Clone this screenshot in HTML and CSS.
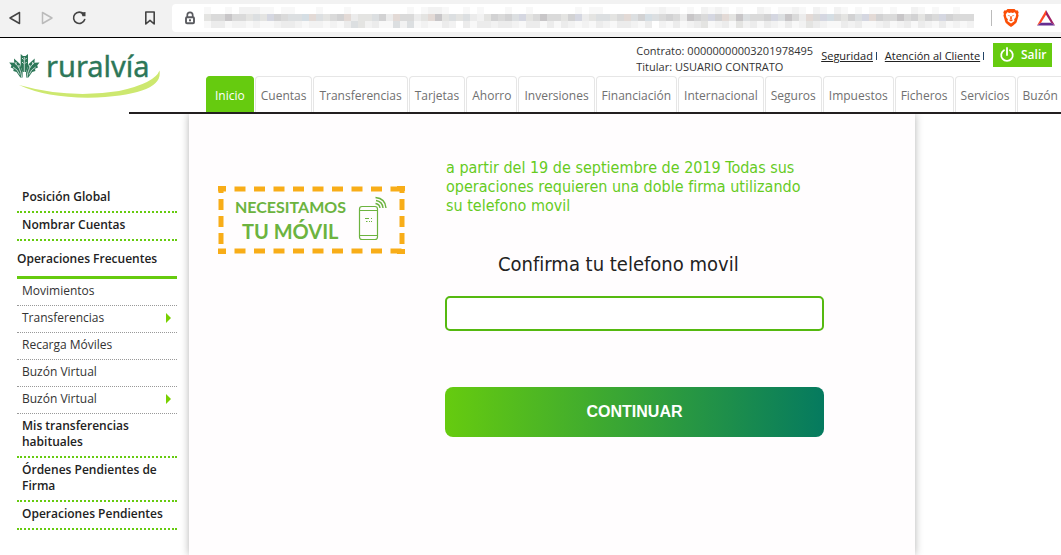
FILE: index.html
```html
<!DOCTYPE html>
<html lang="es">
<head>
<meta charset="utf-8">
<title>ruralvía</title>
<meta name="viewport" content="width=device-width, initial-scale=1">
<link rel="stylesheet" href="styles.css">
</head>
<body>
<div class="browser-bar">
  <div class="browser-nav">
    <button type="button" class="icon-button" aria-label="Atrás"><svg width="16" height="18" viewBox="0 0 16 18"><path d="M12.500 3.500v11L3 9z" fill="none" stroke="#444" stroke-width="1.500" stroke-linejoin="round"/></svg></button>
    <button type="button" class="icon-button" aria-label="Adelante"><svg width="16" height="18" viewBox="0 0 16 18"><path d="M3.500 3.500v11L13 9z" fill="none" stroke="#bbb" stroke-width="1.500" stroke-linejoin="round"/></svg></button>
    <button type="button" class="icon-button" aria-label="Recargar"><svg width="16" height="18" viewBox="0 0 16 18"><path d="M12.600 5.100A5.700 5.700 0 1 0 13.700 10.500" fill="none" stroke="#444" stroke-width="1.600" stroke-linecap="round"/><path d="M10 3.500l4.500-.5v4.200h-3z" fill="#444"/></svg></button>
  </div>
  <button type="button" class="icon-button bookmark" aria-label="Marcador"><svg width="16" height="18" viewBox="0 0 16 18"><path d="M3.800 3h8.400v12L8 11.300 3.800 15z" fill="none" stroke="#444" stroke-width="1.600" stroke-linejoin="round"/></svg></button>
  <div class="address">
    <svg class="lock" width="12" height="14" viewBox="0 0 12 14"><path d="M3.300 6V4a2.700 2.700 0 0 1 5.400 0v2" fill="none" stroke="#5a5b60" stroke-width="1.700"/><rect x="2" y="6.300" width="8" height="6" rx="1" fill="#fff" stroke="#5a5b60" stroke-width="1.900"/><rect x="5" y="8.300" width="2" height="2" fill="#5a5b60"/></svg>
    <svg class="mosaic" id="mosaic" width="770" height="21" viewBox="0 0 770 21" shape-rendering="crispEdges" aria-hidden="true"></svg>
    <span class="divider"></span>
    <svg class="shield" width="16" height="18" viewBox="0 0 16 18"><path d="M4.500 0h7l1.500 1.500 1.500-.2 1.200 2-.6 1.600.5 1.600-1.900 6.500Q13 14.800 8 17.900 3 14.800 2.300 13L.4 6.500l.5-1.600-.6-1.600 1.200-2 1.500.2z" fill="#fb4f07"/><path d="M4.200 3.200L6.500 4l1.500-.4L9.500 4l2.300-.8L13.200 5.500l-.6 3-1.500 1.700.4 1.800L8 14.500 4.500 12l.4-1.800-1.500-1.700-.6-3z" fill="#fff"/><path d="M4.500 6l2.300.6-.4 1zM11.500 6l-2.300.6.4 1zM7.500 7h1l.5 2.500-1 .7-1-.7zM5.800 11L8 10.300l2.200.7L8 12.400z" fill="#fb4f07"/></svg>
    <svg class="triangle" width="18" height="16" viewBox="0 0 18 16"><path d="M9 0L0 15.500 4 12.800 9 4.800z" fill="#ff4724"/><path d="M9 0l9 15.500-4-2.700-5-8z" fill="#9e1f63"/><path d="M0 15.500h18l-4-2.700H4z" fill="#662d91"/></svg>
  </div>
</div>

<header class="header">
  <a class="logo" href="#" aria-label="ruralvía">
    <svg width="156" height="63" viewBox="0 -13 156 63">
      <g fill="#2d7758">
        <path d="M11.700 3L14 5h2.600L19 3v12.500L17 21h-3.400l-1.900-5.500z"/>
        <path d="M5 7.500l6 5.500 2.600 8.500v5h-2.300L7.500 21 4.300 20l.4-2.300-3-1.200.8-2L.2 11.500l5 .2z"/>
        <path d="M25.700 7.500l-6 5.500-2.600 8.500v5h2.300l3.800-5.500 3.200-1-.4-2.300 3-1.200-.8-2 2.300-3-5 .2z"/>
      </g>
      <path d="M15.300 6v20.500M5.500 11.800q6 4.200 7.200 14.500M25.200 11.800q-6 4.200-7.200 14.500M4 16q5 2.500 6.500 7.500M26.700 16q-5 2.500-6.500 7.500" fill="none" stroke="#fff" stroke-width=".7"/>
      <path d="M13 7l1.500 1.500M13 11l1.500 1.500M17.700 7l-1.500 1.500M17.700 11l-1.500 1.500M7 11v2.500M10 14v2.500M23.700 11v2.500M20.700 14v2.500" fill="none" stroke="#fff" stroke-width=".8"/>
      <path d="M10 34Q40 48 88 46.500Q155 43 150.500 19.500Q146 32 110 40Q60 48 10 34z" fill="#cde86f"/>
      <text class="logo-word" x="37" y="26">ruralvía</text>
    </svg>
  </a>
  <div class="header-main">
    <div class="account">
      <p class="contract">Contrato: 00000000003201978495<br>Titular: USUARIO CONTRATO</p>
      <div class="links"><span><a href="#">Seguridad</a> <i class="bar"></i></span><span><a href="#">Atención al Cliente</a> <i class="bar"></i></span></div>
      <button type="button" class="exit"><svg width="16" height="16" viewBox="0 0 16 16"><path d="M5 3.200a5.800 5.800 0 1 0 6 0M8 1v7" fill="none" stroke="#fff" stroke-width="1.800" stroke-linecap="round"/></svg>Salir</button>
    </div>
    <nav class="tabs">
      <a class="tab active" href="#">Inicio</a><a class="tab" href="#">Cuentas</a><a class="tab" href="#">Transferencias</a><a class="tab" href="#">Tarjetas</a><a class="tab" href="#">Ahorro</a><a class="tab" href="#">Inversiones</a><a class="tab" href="#">Financiación</a><a class="tab" href="#">Internacional</a><a class="tab" href="#">Seguros</a><a class="tab" href="#">Impuestos</a><a class="tab" href="#">Ficheros</a><a class="tab" href="#">Servicios</a><a class="tab last" href="#">Buzón</a>
    </nav>
  </div>
</header>

<div class="layout">
  <nav class="sidebar">
    <a class="section" href="#">Posición Global</a>
    <a class="section" href="#">Nombrar Cuentas</a>
    <h2 class="group">Operaciones Frecuentes</h2>
    <a class="item" href="#">Movimientos</a>
    <a class="item more" href="#">Transferencias</a>
    <a class="item" href="#">Recarga Móviles</a>
    <a class="item" href="#">Buzón Virtual</a>
    <a class="item more" href="#">Buzón Virtual</a>
    <a class="section" href="#">Mis transferencias habituales</a>
    <a class="section" href="#">Órdenes Pendientes de Firma</a>
    <a class="section" href="#">Operaciones Pendientes</a>
  </nav>
  <main class="panel">
    <svg class="banner" width="187" height="68" viewBox="0 0 187 68">
      <g fill="none" stroke="#f8ad18" stroke-width="5">
        <path d="M0 3h187M0 65h187" stroke-dasharray="11 8.500" stroke-dashoffset="3"/>
        <path d="M3 0v68M184 0v68" stroke-dasharray="11 6" stroke-dashoffset="4"/>
      </g>
      <g fill="#f8ad18"><path d="M0 0h8v5H0zM179 0h8v5h-8zM0 63h8v5H0zM179 63h8v5h-8z"/></g>
      <text class="banner-small" x="17" y="27">NECESITAMOS</text>
      <text class="banner-large" x="24" y="53">TU MÓVIL</text>
      <g fill="none" stroke="#6cb33f" stroke-width="1.200">
        <rect x="141.500" y="20.500" width="18" height="33" rx="2.500"/>
        <path d="M141.500 24.500h18M141.500 49.500h18"/>
        <path d="M147 32.500h4M153 32.500h1M148 35.500h1.500M151 35.500h1M153 35.500h1"/>
        <path d="M157.500 17.500q4 .5 4.500 4.500M158 14.500q6.500 1 7 7.500M157.500 11.500q10 1 10.500 10.500" stroke-width="1.400"/>
      </g>
    </svg>
    <div class="confirm">
      <p class="notice">a partir del 19 de septiembre de 2019 Todas sus operaciones requieren una doble firma utilizando su telefono movil</p>
      <label class="phone-label" for="phone">Confirma tu telefono movil</label>
      <input class="phone-input" id="phone" type="text">
      <button class="continue" type="button">CONTINUAR</button>
    </div>
  </main>
</div>
<script src="mosaic.js"></script>
</body>
</html>
```
FILE: styles.css
```css
* { box-sizing: border-box; }
body {
  margin: 0;
  min-height: 100vh;
  display: flex;
  flex-direction: column;
  background: #fff;
  color: #333;
  font: 12px/16px "Open Sans", sans-serif;
  overflow-x: hidden;
}
a { color: inherit; text-decoration: none; }
button { font: inherit; border: 0; padding: 0; cursor: pointer; }
svg { display: block; flex: none; }

.browser-bar {
  display: flex;
  align-items: center;
  height: 38px;
  padding: 0 0 2px 7px;
  background: #f2f2f2;
  border-bottom: 1px solid #000;
}
.browser-nav { display: flex; gap: 16px; }
.icon-button { background: none; }
.bookmark { margin: 0 14px 0 55px; }
.address {
  flex: 1;
  min-width: 0;
  display: flex;
  align-items: center;
  height: 28px;
  padding: 0 7px 0 12px;
  background: #fff;
  border-radius: 4px 0 0 4px;
}
.mosaic { margin: 0 17px 0 8px; }
.divider { width: 1px; height: 16px; background: #bbb; flex: none; }
.shield { margin: 0 18px 0 11px; }

.header { display: flex; height: 76px; }
.logo { flex: none; width: 206px; padding-left: 9px; }
.logo-word { font: 29px "Noto Sans", sans-serif; fill: #2d7758; stroke: #2d7758; stroke-width: 0.4; }
.header-main {
  flex: 1;
  min-width: 0;
  display: flex;
  flex-direction: column;
  justify-content: space-between;
}
.account { display: flex; justify-content: flex-end; padding: 5px 9px 0 0; font-size: 11px; }
.contract { margin: 0 8px 0 0; }
.links { display: flex; gap: 8px; padding-top: 5px; margin-right: 9px; }
.links a { text-decoration: underline; color: #222; }
.bar { display: inline-block; width: 1px; height: 8px; background: #246; }
.exit {
  display: flex;
  align-items: center;
  gap: 6px;
  width: 59px;
  height: 24px;
  padding-left: 6px;
  background: #66cb0f;
  color: #fff;
  font-size: 12px;
  font-weight: 600;
}
.tabs { display: flex; gap: 1px; height: 38px; border-bottom: 2px solid #231f20; margin-left: -77px; padding-left: 77px; overflow: hidden; }
.tab {
  flex: none;
  padding: 11px 5px 0;
  border: 1px solid #e6e6e6;
  border-width: 1px 1px 0;
  border-radius: 4px 4px 0 0;
  color: #707070;
}
.tab.active { padding: 11px 8px 0; background: #66cb0f; border-color: #66cb0f; color: #fff; }
.tab.last { flex: 1 0 auto; }

.layout { flex: 1; display: grid; grid-template-columns: 160px minmax(0, 726px); column-gap: 12px; padding-left: 17px; overflow: hidden; }
.sidebar { display: flex; flex-direction: column; padding-top: 71px; }
.section, .item { padding: 4px 0 6px 5px; }
.section { min-height: 28px; font-weight: 600; color: #222; border-bottom: 2px dotted #66cb0f; }
.item { border-bottom: 1px dotted #999; }
.group { margin: 0; padding: 10px 0 9px; color: #222; font-size: 12px; font-weight: 600; line-height: 16px; border-bottom: 3px solid #66cb0f; }
.more { display: flex; justify-content: space-between; align-items: center; padding-right: 6px; }
.more::after { content: ""; border: 5px solid transparent; border-left-color: #78d000; border-right: 0; }

.panel {
  display: flex;
  align-items: flex-start;
  gap: 40px;
  padding: 44px 91px 60px 29px;
  background: #fffdfe;
  box-shadow: 0 0 8px rgba(0, 0, 0, 0.3);
}
.banner { margin-top: 28px; }
.banner-small { font: 700 16px Lato, sans-serif; fill: #6cb33f; }
.banner-large { font: 700 20px Lato, sans-serif; fill: #6cb33f; }
.confirm { flex: 1; min-width: 0; display: flex; flex-direction: column; }
.notice {
  margin: 0 20px 0 1px;
  color: #66cb1f;
  font: 16px/19px "DejaVu Sans Condensed", "Noto Sans", sans-serif;
}
.phone-label {
  margin: 37px 0 0 53px;
  color: #222;
  font: 20px/24px "DejaVu Sans Condensed", "Noto Sans", sans-serif;
}
.phone-input {
  width: 100%;
  height: 35px;
  margin: 20px 0 56px;
  padding: 0 10px;
  border: 2px solid #55b910;
  border-radius: 5px;
  background: #fff;
  font: 16px "Liberation Sans", sans-serif;
}
.continue {
  height: 50px;
  border-radius: 8px;
  background: linear-gradient(90deg, #66cb0f, #057a5f);
  color: #fff;
  font: 700 16px "Liberation Sans", sans-serif;
}
```
FILE: mosaic.js
```js
// Shades of the obscured address, one letter per 7px cell: a is darkest, i is white.
const shades = {
  a: "#c8c6c8", b: "#d2d2d3", c: "#dadada", d: "#dcdfe1", e: "#e4e4e2",
  f: "#ececec", g: "#f2f2f2", h: "#f8f8f8", i: "#ffffff", p: "#e3dad6", q: "#d5d7e1", r: "#d5dee4"
};
const rows = [
  "hiihiggghhihhiiihiiihiiiiiiiihihgghiihihiiihiihiiiiiihihhiiiiiihhghhihighghihiighihhghighighihihhihiighihiihii",
  "eccaccedeqbcddrpdecbpfeedbfpccfepaededfgebcbdqecaccebqfeddecpdbrdcbcfabcqbpeadccbqdacfpcqrcebdqpbccacbebcqbccc",
  "hffhgghghhgffghgghghfdegfhhdgdhghhfgifhffgffghffhfhfghghfghffghfighfhgfehgfhegfhfghfhgefghhfgfhhgfhgfhfghfhghg"
];
const picture = document.getElementById("mosaic");
rows.forEach((row, y) => {
  [...row].forEach((shade, x) => {
    const cell = document.createElementNS("http://www.w3.org/2000/svg", "rect");
    cell.setAttribute("x", x * 7);
    cell.setAttribute("y", y * 7);
    cell.setAttribute("width", 7);
    cell.setAttribute("height", 7);
    cell.setAttribute("fill", shades[shade]);
    picture.append(cell);
  });
});
```
